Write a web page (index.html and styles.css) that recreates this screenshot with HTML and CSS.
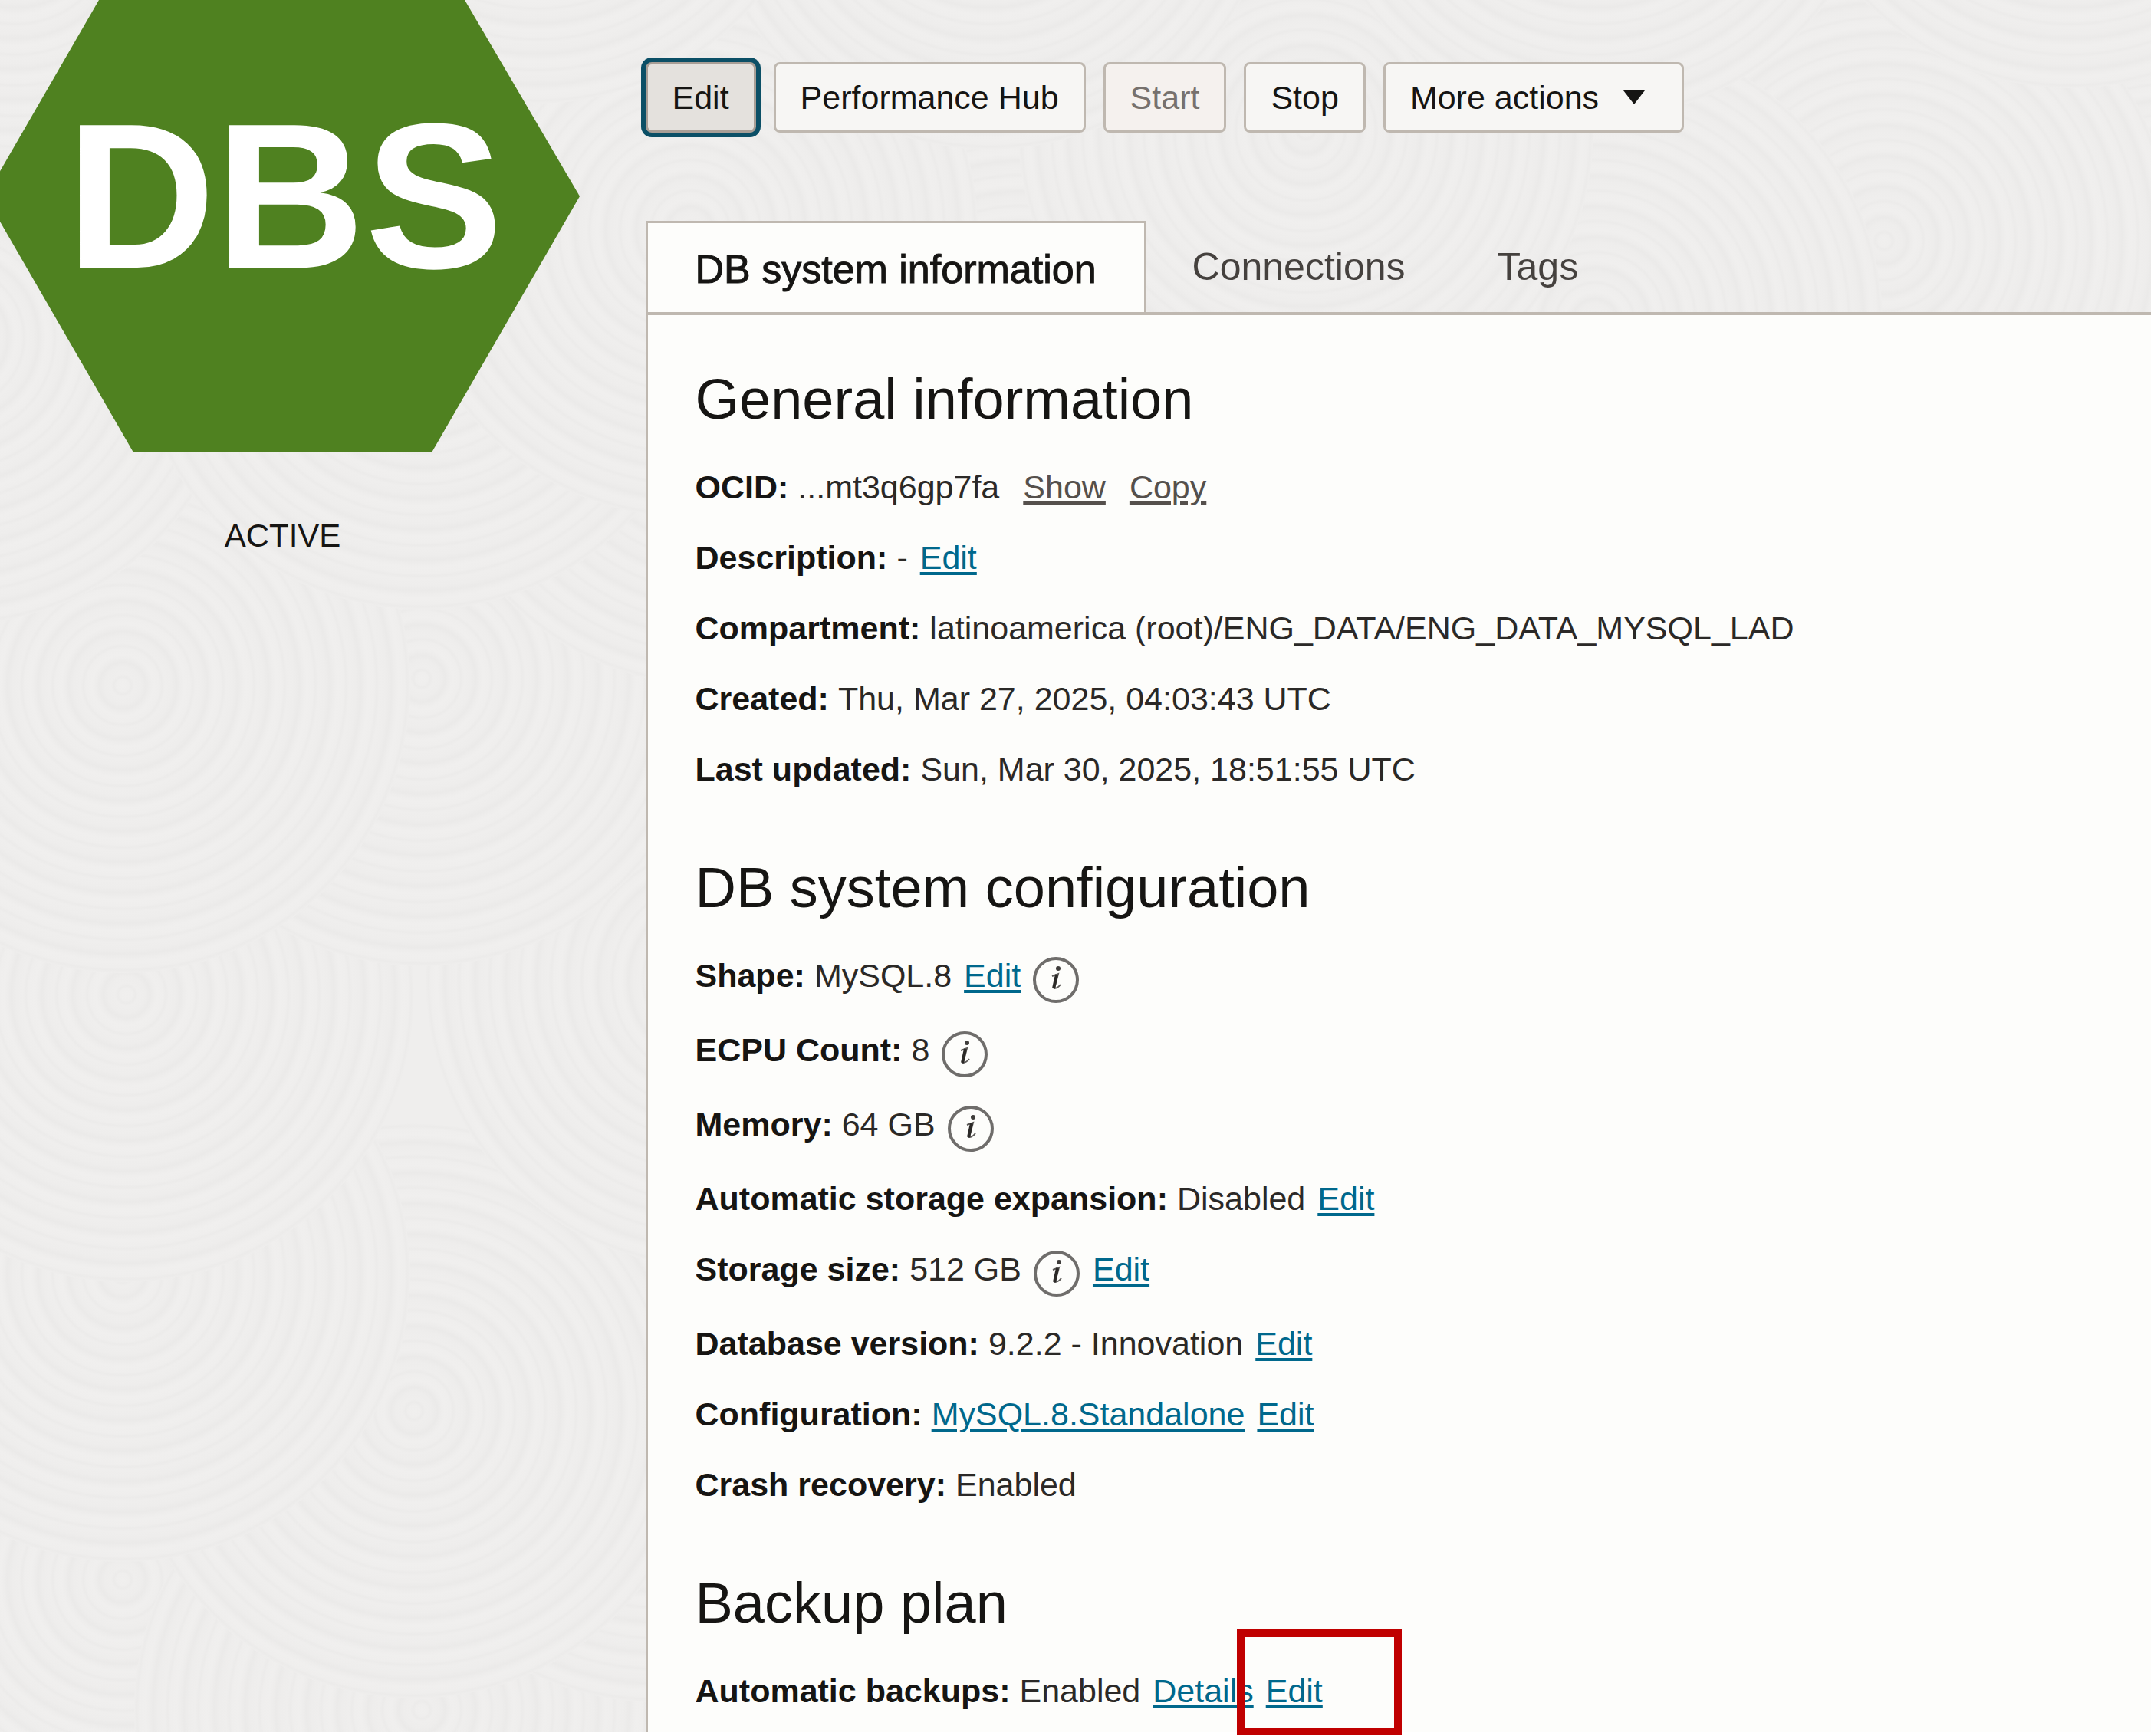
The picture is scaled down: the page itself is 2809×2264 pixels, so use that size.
FILE: index.html
```html
<!DOCTYPE html>
<html lang="en">
<head>
<meta charset="utf-8">
<title>DB system details</title>
<link rel="stylesheet" href="styles.css">
</head>
<body>
<svg class="defs" width="0" height="0" aria-hidden="true">
  <defs>
    <radialGradient id="rings" gradientUnits="userSpaceOnUse" cx="0" cy="0" r="40" spreadMethod="repeat">
      <stop offset="0" stop-color="#f0efee"/>
      <stop offset="0.2" stop-color="#efeeed"/>
      <stop offset="0.28" stop-color="#ecebea"/>
      <stop offset="0.38" stop-color="#efeeed"/>
      <stop offset="0.6" stop-color="#eeedec"/>
      <stop offset="0.76" stop-color="#ebeae9"/>
      <stop offset="0.88" stop-color="#eeedec"/>
      <stop offset="1" stop-color="#f0efee"/>
    </radialGradient>
    <circle id="disc" r="375" fill="url(#rings)"/>
    <symbol id="info" viewBox="0 0 61 61">
      <circle cx="30" cy="30" r="28" fill="none" stroke="#6f6d6b" stroke-width="4"/>
      <circle cx="33" cy="15" r="3" fill="#3f3d3b"/>
      <path d="M25 25 L33 22 L28 41 Q32 41 36 36" fill="none" stroke="#5c5a58" stroke-width="2"/>
      <path d="M31 23 L27 41" fill="none" stroke="#2b2927" stroke-width="4"/>
    </symbol>
  </defs>
</svg>
<div class="page">
  <svg class="texture" viewBox="0 0 2805 2259" preserveAspectRatio="xMinYMin slice" aria-hidden="true">
    <use href="#disc" x="550" y="2400"/><use href="#disc" x="160" y="2420"/>
    <use href="#disc" x="160" y="2060"/><use href="#disc" x="550" y="2230"/>
    <use href="#disc" x="856" y="1845"/><use href="#disc" x="540" y="1840"/>
    <use href="#disc" x="160" y="1662"/><use href="#disc" x="-230" y="1297"/>
    <use href="#disc" x="165" y="1297"/><use href="#disc" x="930" y="1278"/>
    <use href="#disc" x="550" y="885"/><use href="#disc" x="160" y="894"/>
    <use href="#disc" x="930" y="520"/><use href="#disc" x="-60" y="440"/>
    <use href="#disc" x="550" y="420"/><use href="#disc" x="2840" y="400"/>
    <use href="#disc" x="2457" y="314"/><use href="#disc" x="2080" y="420"/>
    <use href="#disc" x="1330" y="480"/><use href="#disc" x="1703" y="170"/>
    <use href="#disc" x="900" y="300"/><use href="#disc" x="1290" y="-180"/>
    <use href="#disc" x="2080" y="-220"/><use href="#disc" x="2700" y="-260"/>
    <use href="#disc" x="700" y="-240"/><use href="#disc" x="20" y="-100"/>
  </svg>

  <aside class="side">
    <svg class="hexagon" viewBox="0 0 756 590" role="img" aria-label="DBS">
      <polygon points="-19,256 129,0 606,0 756,256 563,590 174,590" fill="#4f8120"/>
      <text class="hexagon-text" x="371" y="349" text-anchor="middle">DBS</text>
    </svg>
    <p class="status">ACTIVE</p>
  </aside>

  <main class="main">
    <div class="actions">
      <button class="btn btn-focused" type="button">Edit</button>
      <button class="btn" type="button">Performance Hub</button>
      <button class="btn" type="button" disabled>Start</button>
      <button class="btn" type="button">Stop</button>
      <button class="btn btn-menu" type="button">More actions
        <svg class="caret" viewBox="0 0 28 18" aria-hidden="true"><path d="M0 0H28L14 18Z" fill="#161513"/></svg>
      </button>
    </div>

    <nav class="tabs">
      <a class="tab tab-active" href="#info-panel">DB system information</a>
      <a class="tab" href="#connections">Connections</a>
      <a class="tab" href="#tags">Tags</a>
    </nav>

    <div class="panel" id="info-panel">
      <section class="section">
        <h2>General information</h2>
        <dl class="facts">
          <div class="fact"><dt>OCID:</dt><dd>...mt3q6gp7fa <a class="quiet" href="#show">Show</a> <a class="quiet" href="#copy">Copy</a></dd></div>
          <div class="fact"><dt>Description:</dt><dd>- <a href="#edit">Edit</a></dd></div>
          <div class="fact"><dt>Compartment:</dt><dd>latinoamerica (root)/ENG_DATA/ENG_DATA_MYSQL_LAD</dd></div>
          <div class="fact"><dt>Created:</dt><dd>Thu, Mar 27, 2025, 04:03:43 UTC</dd></div>
          <div class="fact"><dt>Last updated:</dt><dd>Sun, Mar 30, 2025, 18:51:55 UTC</dd></div>
        </dl>
      </section>

      <section class="section">
        <h2>DB system configuration</h2>
        <dl class="facts">
          <div class="fact"><dt>Shape:</dt><dd>MySQL.8 <a href="#edit">Edit</a> <svg class="info"><use href="#info"/></svg></dd></div>
          <div class="fact"><dt>ECPU Count:</dt><dd>8 <svg class="info"><use href="#info"/></svg></dd></div>
          <div class="fact"><dt>Memory:</dt><dd>64 GB <svg class="info"><use href="#info"/></svg></dd></div>
          <div class="fact"><dt>Automatic storage expansion:</dt><dd>Disabled <a href="#edit">Edit</a></dd></div>
          <div class="fact"><dt>Storage size:</dt><dd>512 GB <svg class="info"><use href="#info"/></svg> <a href="#edit">Edit</a></dd></div>
          <div class="fact"><dt>Database version:</dt><dd>9.2.2 - Innovation <a href="#edit">Edit</a></dd></div>
          <div class="fact"><dt>Configuration:</dt><dd><a href="#configuration">MySQL.8.Standalone</a> <a href="#edit">Edit</a></dd></div>
          <div class="fact"><dt>Crash recovery:</dt><dd>Enabled</dd></div>
        </dl>
      </section>

      <section class="section">
        <h2>Backup plan</h2>
        <dl class="facts">
          <div class="fact"><dt>Automatic backups:</dt><dd>Enabled <a href="#details">Details</a> <span class="marked"><a href="#edit">Edit</a></span></dd></div>
        </dl>
      </section>
    </div>
  </main>
</div>
</body>
</html>
```
FILE: styles.css
```css
*,
*::before {
  box-sizing: border-box;
}

body {
  margin: 0;
  padding: 0 4px 5px 0;
  background: #fff;
  color: #161513;
  font-family: "Liberation Sans", Arial, sans-serif;
  font-size: 43px;
  line-height: 56px;
}

.defs {
  position: absolute;
}

.page {
  position: relative;
  display: grid;
  grid-template-columns: 3fr 7fr;
  min-height: calc(100vh - 5px);
  background: #efeeed;
}

/* Ring texture behind the whole page */
.texture {
  position: absolute;
  inset: 0;
  width: 100%;
  height: 100%;
}

.side,
.main {
  position: relative;
  min-width: 0;
}

.main {
  display: flex;
  flex-direction: column;
  padding-top: 81px;
}

/* Status column */
.hexagon {
  display: block;
  width: 756px;
  height: 590px;
}

.hexagon-text {
  fill: #fff;
  font-size: 270px;
  font-weight: 700;
}

.status {
  width: 737px;
  margin: 81px 0 0;
  font-size: 42px;
  text-align: center;
}

/* Action bar */
.actions {
  display: flex;
  gap: 23px;
  margin-bottom: 115px;
}

.btn {
  display: flex;
  align-items: center;
  height: 92px;
  padding: 0 32px;
  border: 3px solid #bfb8b0;
  border-radius: 8px;
  background: #f7f6f4;
  color: #161513;
  font: inherit;
}

.btn-focused {
  border-color: #a89e96;
  background: #e4e1dd;
  box-shadow: 0 0 0 6px #0b4f66;
}

.btn:disabled {
  background: #f5f1ee;
  color: #77716d;
}

.btn-menu {
  gap: 32px;
  padding-right: 48px;
}

.caret {
  width: 28px;
  height: 18px;
}

/* Tabs */
.tabs {
  display: flex;
}

.tab {
  height: 119px;
  padding: 0 60px;
  color: #45413e;
  font-size: 50px;
  line-height: 121px;
  text-decoration: none;
}

.tab-active {
  padding: 0 62px;
  border: 3px solid #bfb8b0;
  border-bottom: 0;
  background: #fdfdfb;
  color: #161513;
  font-size: 52px;
  -webkit-text-stroke: 1px #161513;
}

.panel {
  flex: 1;
  padding: 68px 62px 0;
  border: solid #bfb8b0;
  border-width: 4px 0 0 3px;
  background: #fdfdfb;
}

.section + .section {
  margin-top: 85px;
}

h2 {
  margin: 0 0 44px;
  font-size: 74px;
  font-weight: 400;
  line-height: 84px;
}

.facts {
  display: grid;
  gap: 36px;
  margin: 0;
}

.fact {
  display: flex;
  gap: 12px;
}

dt {
  font-weight: 700;
}

dd {
  display: flex;
  gap: 16px;
  margin: 0;
  color: #2b2927;
}

dd a {
  color: #00688c;
  text-decoration-thickness: 4px;
  text-underline-offset: 4px;
}

dd .quiet {
  margin-left: 15px;
  color: #55504c;
}

.info {
  width: 61px;
  height: 61px;
  margin: 4px 0 -4px;
}

/* Red outline that calls out the backup edit link */
.marked {
  position: relative;
}

.marked::before {
  content: "";
  position: absolute;
  top: -52px;
  left: -38px;
  width: 215px;
  height: 138px;
  border: 10px solid #c00000;
  pointer-events: none;
}
```
